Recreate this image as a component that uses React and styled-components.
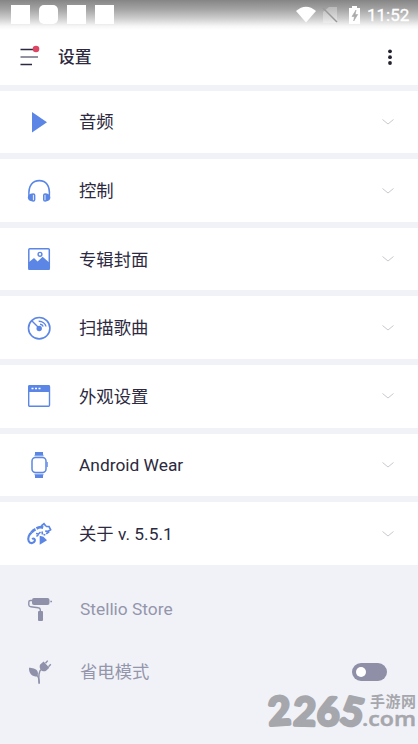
import React from 'react';
import styled, { createGlobalStyle } from 'styled-components';

const Global = createGlobalStyle`
  * { box-sizing: border-box; }
  body { margin: 0; background: #f1f2f8; font-family: Roboto, "Noto Sans CJK SC", sans-serif; }
`;
const Screen = styled.main`
  position: relative;
  display: flex;
  flex-direction: column;
  height: 744px;
  overflow: hidden;
  background: #f1f2f8;
`;
const Header = styled.header`
  height: 84.7px;
  flex: none;
  background: linear-gradient(#858585 0, #a3a3a3 9px, #d0d0d0 19px, #f6f6f6 26px, #fff 30px);
`;
const StatusBar = styled.div`
  display: flex;
  align-items: center;
  height: 28px;
  padding: 1px 8px 0 11px;
  color: #fff;
`;
const Notice = styled.i`
  width: 19px;
  height: 19px;
  margin-right: 9px;
  border-radius: ${p => (p.$round ? 5 : 0)}px;
  background: #fff;
`;
const StatusIcons = styled.svg`
  width: 70px;
  height: 20px;
  margin-left: auto;
  margin-right: 1px;
`;
const Clock = styled.span`
  width: 43px;
  font-size: 17px;
  line-height: 20px;
  font-weight: 400;
  -webkit-text-stroke: .3px #fff;
  white-space: nowrap;
`;
const TitleBar = styled.div`
  display: flex;
  align-items: center;
  height: 56px;
  padding: 0 20px;
`;
const MenuIcon = styled.svg`
  width: 20px;
  height: 24px;
`;
const Title = styled.h1`
  flex: 1;
  margin: 0 0 0 18px;
  padding-top: 1px;
  font-size: 16.8px;
  line-height: 24px;
  font-weight: 500;
  color: #2c2940;
`;
const MoreIcon = styled.svg`
  width: 6px;
  height: 18px;
  margin: 2px 5px 0 0;
`;
const List = styled.section`
  display: flex;
  flex-direction: column;
  gap: 6px;
  padding-top: 6px;
`;
const Row = styled.div`
  display: flex;
  align-items: center;
  height: 62.6px;
  padding: 0 23px 0 24px;
  background: #fff;
  color: #2c2940;
`;
const PlainRow = styled(Row)`
  height: 63px;
  background: transparent;
  color: #9496ab;
`;
const Extras = styled.section`
  padding-top: 12.5px;
`;
const Icon = styled.svg`
  width: 30px;
  height: 30px;
  flex: none;
  color: ${p => (p.$muted ? '#8f91aa' : '#5b86e5')};
`;
const Label = styled.span`
  flex: 1;
  margin-left: ${p => p.$inset || 25}px;
  padding-top: ${p => p.$drop || 0}px;
  font-size: 17.35px;
  line-height: 24px;
`;
const Chevron = styled.svg`
  width: 14px;
  height: 8px;
`;
const Switch = styled.div`
  width: 35px;
  height: 18px;
  margin-right: 8px;
  padding: 4px;
  border-radius: 9px;
  background: #8f90a8;
  &::before {
    content: '';
    display: block;
    width: 10px;
    height: 10px;
    border-radius: 50%;
    background: #fff;
  }
`;
const Watermark = styled.svg`
  position: absolute;
  right: 0;
  bottom: 6px;
  width: 156px;
  height: 56px;
  fill: #a6a7ac;
  stroke: #a6a7ac;
  stroke-linejoin: round;
`;

const art = {
  play: <path d="M8 5v20.5l15-10.2z" fill="currentColor" />,
  headphones: (
    <g fill="none" stroke="currentColor" strokeWidth="1.6">
      <path d="M5 20c-1-11 4-15.400 10.300-15.400S26.300 9 25.300 20" />
      <path d="M8.500 17.500c-3 0-4.700 1.800-4.700 3.900s1.700 3.900 4.700 3.900zM21.700 17.500c3 0 4.700 1.800 4.700 3.900s-1.700 3.900-4.700 3.900z" fill="currentColor" stroke="none" />
      <rect x="8" y="18" width="2.600" height="7" rx="1.300" />
      <rect x="19.800" y="18" width="2.600" height="7" rx="1.300" />
    </g>
  ),
  image: (
    <g>
      <rect x="4.800" y="4.800" width="20.500" height="20.500" rx="1" fill="none" stroke="currentColor" strokeWidth="1.500" />
      <path d="M4.500 18.500l5.500-4.500 3.600 3.600 5-4.900 6.900 6V26h-21z" fill="currentColor" />
      <circle cx="16" cy="10.300" r="1.900" fill="none" stroke="currentColor" strokeWidth="1.400" />
    </g>
  ),
  gauge: (
    <g fill="none" stroke="currentColor" strokeWidth="1.600">
      <circle cx="15.200" cy="15.200" r="10.700" />
      <path d="M8 8l7 7M14.700 8.300c3.700-.1 6.800 2.300 7.300 5.200M16 11.300c1.700 0 2.800 1 3.200 2.200" strokeWidth="1.400" />
      <circle cx="15.200" cy="15.500" r="2.700" fill="currentColor" stroke="none" />
    </g>
  ),
  window: (
    <g>
      <rect x="4.700" y="4.800" width="20.800" height="20.500" rx="1" fill="none" stroke="currentColor" strokeWidth="1.400" />
      <path d="M4 6q0-2 2-2h18q2 0 2 2v5H4z" fill="currentColor" />
      <path d="M7.500 7.500h2M11 7.500h2M14.500 7.500h2" stroke="#fff" strokeWidth="1.700" />
    </g>
  ),
  watch: (
    <g>
      <path d="M11 2h8v3h-8zM11 25h8v3h-8z" fill="currentColor" />
      <rect x="8" y="7.500" width="14" height="15" rx="3.500" fill="none" stroke="currentColor" strokeWidth="1.500" />
      <path d="M10.500 5.500h9M10.500 24.500h9M23.300 12v5" stroke="currentColor" strokeWidth="1.300" opacity=".75" />
    </g>
  ),
  chameleon: (
    <g fill="none" stroke="currentColor" strokeWidth="2.100">
      <path d="M8.200 20.200c1.500-1.500 3.200-.2 2.600 1.700-.9 2.700-4.900 3.100-6.100.2-1.200-3 .2-6.800 3-8.600" />
      <path d="M7.500 13.500c1-1.500 2.200-2.500 4-3.300M12.500 9.500c2.200-1.400 4.400-1.700 6.700-.9" strokeWidth="2.700" />
      <path d="M17.300 7l2.700-2.300 2 2.500M22 7.300l3 .2 1.600 3.200-2.400 1.600-3-.2M25.200 12.500l-3 2.400" strokeWidth="1.700" />
      <path d="M12 14.500l2.500.5 2-2M12.500 17.500l2-2M18 12.500l.5 3M19.500 15.500l1.800.5" strokeWidth="1.600" />
      <path d="M15.700 16.700v9l7.300-4.500-3.600-3.500z" fill="currentColor" stroke="none" />
    </g>
  ),
  roller: (
    <g fill="currentColor">
      <rect x="8" y="4" width="17.500" height="7" rx="2" />
      <path d="M26.300 7.500H28M8 6.500H6.500Q4.800 6.500 4.800 8v3q0 1.400 2 1.700l7.500 1q2 .2 2 2v2" fill="none" stroke="currentColor" strokeWidth="1.400" />
      <rect x="14" y="17" width="5" height="10" rx="1" />
    </g>
  ),
  plant: (
    <g fill="currentColor">
      <path d="M5 10.800c3 .2 7 .8 8.500 3.500.9 1.800.4 4-.4 5.300C8.200 19.600 4.800 17 5 10.800z" />
      <path d="M16.200 7.500l3.400-3 5.700 6.200-2.900 2.700c-2 1.600-4.300.9-5.600-.7-1.200-1.500-1.600-3.500-.6-5.200z" />
      <path d="M21.500 6.300l2.200-2.700M24.500 9.700l2.300-2.500M17.700 12.200c-2.700 1.500-3.600 5.500-2.500 14.500" fill="none" stroke="currentColor" strokeWidth="1.400" />
      <path d="M13 18.500c1.500 1 2.100 3.500 2.200 8" fill="none" stroke="currentColor" strokeWidth="1.400" />
    </g>
  ),
};

const items = [
  ['play', '音频', 1], ['headphones', '控制', 0], ['image', '专辑封面', 2],
  ['gauge', '扫描歌曲', 0], ['window', '外观设置', 1],
  ['watch', 'Android Wear', 0], ['chameleon', '关于 v. 5.5.1', 0],
];

const Glyph = ({ name, muted }) => <Icon viewBox="0 0 30 30" $muted={muted}>{art[name]}</Icon>;

export default function App() {
  return (
    <Screen>
      <Global />
      <Header>
        <StatusBar>
          <Notice /><Notice $round /><Notice /><Notice />
          <StatusIcons viewBox="0 0 70 20">
            <path d="M0 6Q10-2.500 20 6L10 17.500z" fill="#fff" />
            <path d="M33 2h8v16H27V7z" fill="#fff" opacity=".3" />
            <path d="M27 3l14 14" stroke="#999" strokeWidth="1.500" />
            <path d="M53 3h3V1h5v2h3v16H53z" fill="#fff" />
            <path d="M60 5l-4 6.500h2.500L57.700 16l4-6.500h-2.500z" fill="#aaa" stroke="#aaa" strokeWidth=".6" />
          </StatusIcons>
          <Clock>11:52</Clock>
        </StatusBar>
        <TitleBar>
          <MenuIcon viewBox="0 0 20 24">
            <path d="M.5 5.500h13M.5 20.500h11.500" stroke="#2c2940" strokeWidth="1.300" />
            <path d="M.5 13h17.500" stroke="#77768a" strokeWidth="1.600" />
            <circle cx="16" cy="5" r="3.300" fill="#dc4664" />
          </MenuIcon>
          <Title>设置</Title>
          <MoreIcon viewBox="0 0 6 18" fill="#24222f">
            <circle cx="3" cy="3.300" r="1.900" /><circle cx="3" cy="9.200" r="1.900" /><circle cx="3" cy="15" r="1.900" />
          </MoreIcon>
        </TitleBar>
      </Header>
      <List>
        {items.map(([icon, label, drop]) => (
          <Row key={icon}>
            <Glyph name={icon} />
            <Label $drop={drop}>{label}</Label>
            <Chevron viewBox="0 0 14 8"><path d="M1.500 1.500L7 6l5.500-4.500" fill="none" stroke="#c9c9d0" strokeWidth="1" /></Chevron>
          </Row>
        ))}
      </List>
      <Extras>
        <PlainRow><Glyph name="roller" muted /><Label $inset={26}>Stellio Store</Label></PlainRow>
        <PlainRow><Glyph name="plant" muted /><Label $inset={26} $drop={1}>省电模式</Label><Switch /></PlainRow>
      </Extras>
      <Watermark viewBox="0 0 156 56">
        <g fontFamily="Lato" fontWeight="700" fontSize="39" strokeWidth="3.200">
          <text transform="translate(7 43.500) rotate(-4)">2</text>
          <text transform="translate(31 43) rotate(2)">2</text>
          <text transform="translate(54.500 43) rotate(2)">6</text>
          <text transform="translate(76.500 41) rotate(12)">5</text>
        </g>
        <text x="100" y="43.500" fontFamily="Open Sans" fontWeight="600" fontSize="20" strokeWidth=".5" textLength="54" lengthAdjust="spacingAndGlyphs">.com</text>
        <text x="108" y="24.500" fontFamily="Noto Sans CJK SC" fontWeight="700" fontSize="15" stroke="none" textLength="46">手游网</text>
      </Watermark>
    </Screen>
  );
}
